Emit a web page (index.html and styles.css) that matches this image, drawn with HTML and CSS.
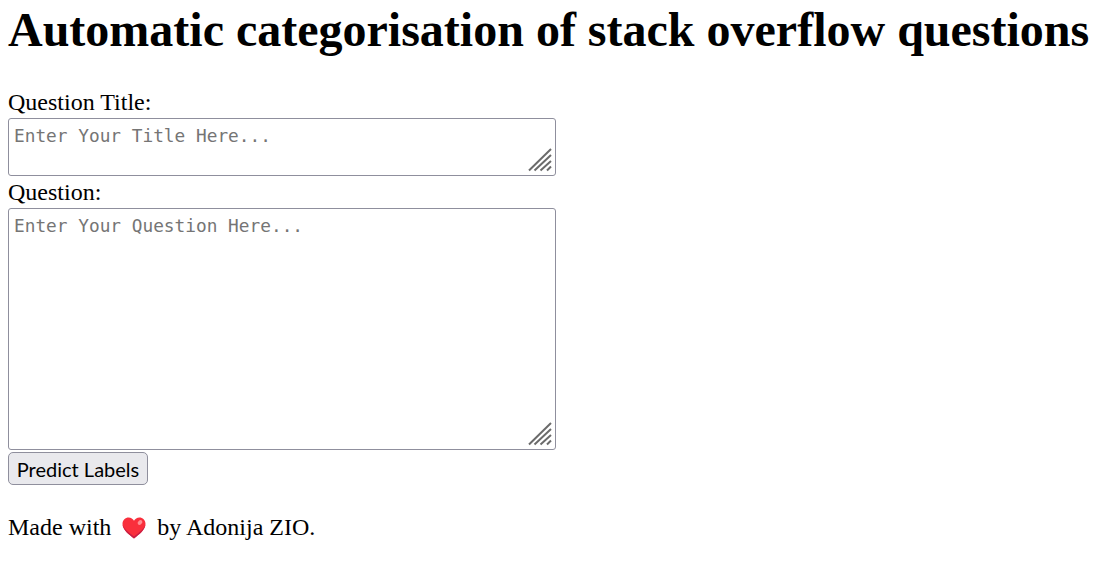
FILE: index.html
```html
<!DOCTYPE html>
<html>
<head>
    <link rel="stylesheet" href="styles.css">
    <title>Automatic categorisation of stack overflow questions</title>
</head>
<body>
    <h1>Automatic categorisation of stack overflow questions</h1>
    <form>
        <label for="title">Question Title:</label>
        <div class="field">
            <textarea id="title" class="title-box" placeholder="Enter Your Title Here..."></textarea>
            <svg class="grip" viewBox="0 0 24 24" width="24" height="24">
                <path d="M1 22.5 23 1M6.500 22.500 23 7M12.500 22.500 23 13M19 22.500 23 18.500"/>
            </svg>
        </div>
        <label for="question">Question:</label>
        <div class="field">
            <textarea id="question" class="question-box" placeholder="Enter Your Question Here..."></textarea>
            <svg class="grip" viewBox="0 0 24 24" width="24" height="24">
                <path d="M1 22.5 23 1M6.500 22.500 23 7M12.500 22.500 23 13M19 22.500 23 18.500"/>
            </svg>
        </div>
        <button type="button">Predict Labels</button>
    </form>
    <p class="credit">Made with
        <svg class="heart" viewBox="0 0 24 22" width="24" height="22">
            <path d="M12 21.500C7 17.500 0.500 13 0.500 6.800 0.500 3 3.400 0.500 6.600 0.500 9 0.500 11 1.800 12 3.800 13 1.800 15 0.500 17.400 0.500 20.600 0.500 23.500 3 23.500 6.800 23.500 13 17 17.500 12 21.500Z" fill="#f92f3c"/>
            <path d="M12 21.500C7 17.500 0.500 13 0.500 6.800 0.500 10.500 7 16 12 19.500 17 16 23.500 10.500 23.500 6.800 23.500 13 17 17.500 12 21.500Z" fill="#c71f45"/>
            <ellipse cx="18" cy="5.500" rx="2.600" ry="2" transform="rotate(-40 18 5.500)" fill="#ff8d93"/>
        </svg>
        by Adonija ZIO.</p>
</body>
</html>
```

FILE: styles.css
```css
body {
    margin: 8px;
    font-family: "Liberation Serif", serif;
    font-size: 24px;
    color: #000;
    background-color: #fff;
}

h1 {
    font-size: 48px;
    font-weight: bold;
    margin: 0 0 34px 0;
    line-height: 44px;
    white-space: nowrap;
}

label {
    display: block;
    line-height: 32px;
}

.field {
    position: relative;
    width: 548px;
}

textarea {
    display: block;
    width: 548px;
    padding: 6px 5px 2px 5px;
    border: 1px solid #8f8f9d;
    border-radius: 3px;
    font-family: "DejaVu Sans Mono", monospace;
    font-size: 17.8px;
    box-sizing: border-box;
    background-color: #fff;
    resize: none;
}

textarea::placeholder {
    color: #757575;
}

.title-box {
    height: 58px;
}

.question-box {
    height: 242px;
}

/* resize handle sits over the corner of the textarea */
.grip {
    position: absolute;
    right: 4px;
    bottom: 4px;
    fill: none;
    stroke: #6b6b6b;
    stroke-width: 2;
}

button {
    display: block;
    margin-top: 2px;
    height: 33px;
    width: 140px;
    padding: 0;
    font-family: "Lato", sans-serif;
    font-size: 20px;
    color: #000;
    background-color: #e9e9ed;
    border: 1px solid #8f8f9d;
    border-radius: 5px;
}

.credit {
    margin: 29px 0 0 0;
    line-height: 27px;
}

.heart {
    vertical-align: -4px;
    margin: 0 5px;
}
```
